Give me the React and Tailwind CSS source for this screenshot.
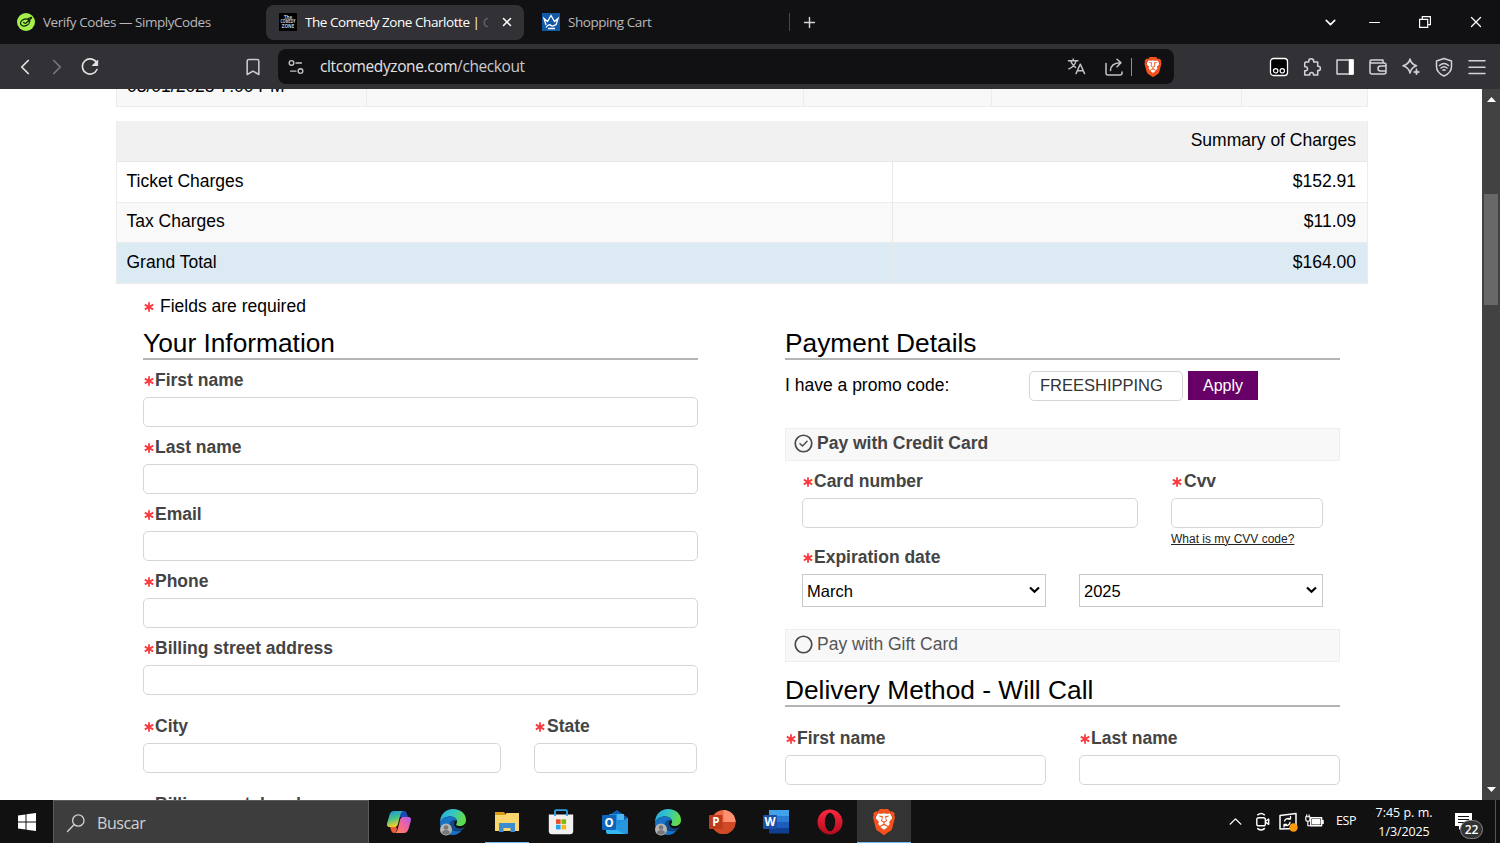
import { Bookmark, ChevronDown, ChevronLeft, ChevronRight, ChevronUp, Menu, Minus, Plus, X } from 'lucide-react'
import { SiBrave } from 'react-icons/si'

const charges = [
  { label: 'Ticket Charges', amount: '$152.91', bg: 'bg-white' },
  { label: 'Tax Charges', amount: '$11.09', bg: 'bg-[#f9f9f9]' },
  { label: 'Grand Total', amount: '$164.00', bg: 'bg-[#dceaf4]' },
]

const infoFields = ['First name', 'Last name', 'Email', 'Phone', 'Billing street address']

function Svg({ size = 20, className = '', children }) {
  return (
    <svg
      width={size}
      height={size}
      viewBox="0 0 20 20"
      fill="none"
      stroke="currentColor"
      strokeWidth="1.5"
      strokeLinecap="round"
      strokeLinejoin="round"
      className={`shrink-0 ${className}`}
    >
      {children}
    </svg>
  )
}

/* ---------- browser ---------- */

function BraveLogo({ size }) {
  return (
    <span className="grid shrink-0 place-items-center">
      <svg width={size} height={size} viewBox="0 0 24 24" className="col-start-1 row-start-1">
        <path d="M6 4h12l2 5-3 9-5 4-5-4-3-9z" fill="#fff" />
      </svg>
      <SiBrave size={size} color="#f4511c" className="col-start-1 row-start-1" />
    </span>
  )
}

function TabBar() {
  return (
    <div className="flex h-11 items-center bg-[#111114] text-[13.500px] text-[#b9b9bb]">
      <div className="flex w-[266px] items-center pl-[17px]">
        <svg width="18" height="18" viewBox="0 0 18 18">
          <circle cx="9" cy="9" r="9" fill="#a5f04c" />
          <ellipse cx="8" cy="9.500" rx="4.600" ry="3.300" fill="none" stroke="#16280c" strokeWidth="1.300" transform="rotate(-20 8 9.500)" />
          <path d="M6.500 9.500l2 1L14.500 5M11 5.500l3.500-1.200M10 9l3-1" fill="none" stroke="#16280c" strokeWidth="1.300" strokeLinecap="round" />
        </svg>
        <span className="ml-2 whitespace-nowrap tracking-[-0.45px]">Verify Codes — SimplyCodes</span>
      </div>
      <div className="flex h-[35px] w-[258px] items-center rounded-lg bg-[#323136] pl-[13px] text-white">
        <svg width="18" height="18" viewBox="0 0 18 18" fill="#ccc" fontFamily="Open Sans, sans-serif" fontSize="4.500" fontWeight="700" textAnchor="middle">
          <path d="M0 0h18v18H0z" fill="#000" />
          <text x="9" y="5.500">The</text>
          <text x="9" y="10.300" textLength="15" lengthAdjust="spacingAndGlyphs">COMEDY</text>
          <text x="9" y="15">ZONE</text>
        </svg>
        <span className="ml-2 w-[183px] overflow-hidden whitespace-nowrap tracking-[-0.45px]">
          The Comedy Zone Charlotte | <span className="text-[#69686e]">C</span>
        </span>
        <X size={14} strokeWidth={2.600} className="ml-3" />
      </div>
      <div className="flex w-[265px] items-center pl-[18px]">
        <svg width="18" height="18" viewBox="0 0 18 18">
          <path d="M0 0h18v18H0z" fill="#1259a8" />
          <path d="M4 12L2 5.500l3.500 3L9 2.500l3.500 6 3.500-3-2 6.500M4 14.500c2-3.500 4-3 5-2s3 .5 5-1M6 15.500h7" fill="none" stroke="#fff" strokeWidth="1.300" />
        </svg>
        <span className="ml-2 tracking-[-0.45px]">Shopping Cart</span>
      </div>
      <div className="h-[18px] w-px bg-[#48474c]" />
      <Plus size={17} strokeWidth={2} className="ml-[11px] text-[#d5d5d7]" />
      <div className="ml-auto flex items-center text-white">
        <ChevronDown size={17} strokeWidth={2.200} />
        <Minus size={17} strokeWidth={1.500} className="ml-[27px]" />
        <Svg size={18} className="ml-[33px]">
          <path d="M4 7h9v9H4zM7 6.500V4h9v9h-2.500" strokeWidth="1.300" strokeLinecap="square" strokeLinejoin="miter" />
        </Svg>
        <X size={18} strokeWidth={1.700} className="mr-[15px] ml-[33px]" />
      </div>
    </div>
  )
}

function ToolbarIcons() {
  return (
    <div className="ml-auto flex items-center gap-[13px] pr-[13px] text-[#d4d4d8]">
      <Svg>
        <rect x="1.500" y="1.500" width="17" height="17" rx="3" fill="#000" stroke="#fff" strokeWidth="1.300" />
        <circle cx="6.700" cy="13.800" r="2.200" stroke="#fff" strokeWidth="1.200" />
        <circle cx="13.300" cy="13.800" r="2.200" stroke="#fff" strokeWidth="1.200" />
      </Svg>
      <Svg>
        <path d="M3.500 5h3.200V4.300a2.500 2.500 0 0 1 5 0V5h4v4.200h.5a2.200 2.200 0 0 1 0 4.400h-.5V18h-4.200v-.7a1.900 1.900 0 0 0-3.800 0V18H2.700v-4.200h.8a2 2 0 0 0 0-4h-.8V6z" />
      </Svg>
      <Svg>
        <path d="M2 3h16v14H2z" />
        <path d="M14.500 3H18v14h-3.500z" fill="#fff" stroke="#fff" />
      </Svg>
      <Svg>
        <path d="M2 4.500A1.500 1.500 0 0 1 3.500 3h11.500v3M2 4.500V15a2 2 0 0 0 2 2h12a2 2 0 0 0 2-2V8a2 2 0 0 0-2-2H3.500A1.500 1.500 0 0 1 2 4.500zM18 9h-5.500a2.500 2.500 0 0 0 0 5H18" />
      </Svg>
      <Svg>
        <path d="M9 2c.8 4 2.500 5.500 6.500 6.700C11.500 10 9.800 12 9 16 8.200 12 6.500 10.200 2 8.700 6.500 7.500 8.200 6 9 2z" />
        <path d="M15.500 12l.8 2.200 2.200.8-2.200.8-.8 2.200-.8-2.200-2.200-.8 2.200-.8z" fill="currentColor" strokeWidth="0.800" />
      </Svg>
      <Svg>
        <path d="M10 1.500L17.500 4v5.500c0 4.500-3 7.500-7.500 9.500-4.500-2-7.500-5-7.500-9.500V4z" />
        <path d="M5.500 8.500c2.700-2.300 6.300-2.300 9 0M7 11c1.800-1.600 4.200-1.600 6 0M9 13.200c.6-.5 1.400-.5 2 0" />
      </Svg>
      <Svg>
        <path d="M2 3.800h16M2 10.200h16M2 16.600h16" />
      </Svg>
    </div>
  )
}

function Toolbar() {
  return (
    <div className="flex h-[45px] items-center bg-[#323136]">
      <div className="flex w-[278px] items-center pl-[12px] text-[#e4e4e6]">
        <ChevronLeft size={26} strokeWidth={1.600} />
        <ChevronRight size={26} strokeWidth={1.600} className="ml-[6px] text-[#77767c]" />
        <Svg size={20} className="ml-[10px]">
          <path d="M16.400 5.300A7.600 7.600 0 1 0 17 12.500" strokeWidth="1.600" />
          <path d="M17.700 3.500v5h-5z" fill="currentColor" strokeWidth="1" />
        </Svg>
        <Bookmark size={20} strokeWidth={1.900} className="ml-[143px] text-[#c9c9cc]" />
      </div>
      <div className="flex h-[35px] w-[896px] items-center rounded-lg bg-[#111114] px-[9px] text-[#c4c4c7]">
        <Svg size={18}>
          <circle cx="5" cy="5.500" r="2.600" />
          <path d="M10 5.500h6M4 14.500h6" />
          <circle cx="15" cy="14.500" r="2.600" />
        </Svg>
        <span className="ml-[15px] text-[15.500px] tracking-[-0.4px] text-[#e2e2e4]">
          cltcomedyzone.com<span className="text-[#c9c9cc]">/checkout</span>
        </span>
        <Svg size={19} className="ml-auto">
          <path d="M1.500 4h10M6.500 2v2M9.500 4c-1 4-4 7-7.500 8.500M4 4.500c1 2.800 3 5 5 6.500M9.500 17.500L14 7.500l4.500 10M11 14.500h6" />
        </Svg>
        <Svg size={20} className="ml-[18px]">
          <path d="M2 6.500V16a2 2 0 0 0 2 2h12a2 2 0 0 0 2-2v-1M6.500 13.500c.3-5 3-7.500 9.500-7.700M13 2.200l4 3.600-4 4" />
        </Svg>
        <div className="ml-[7px] h-[18px] w-px bg-[#8f8e93]" />
        <div className="mr-[2px] ml-[11px]">
          <BraveLogo size={20} />
        </div>
      </div>
      <ToolbarIcons />
    </div>
  )
}

/* ---------- checkout page ---------- */

function Star() {
  return (
    <svg width="10" height="10" viewBox="0 0 10 10" stroke="#fb3a3f" strokeWidth="1.800" className="mt-[2px] shrink-0">
      <path d="M5 .3v9.400M.8 2.600l8.400 4.800M9.200 2.600L.8 7.400" />
    </svg>
  )
}

function Field({ label, className = '', gap = 'gap-[1px]' }) {
  return (
    <div className={className}>
      <label className={`flex h-6 items-center pl-[1px] font-bold text-[#444] ${gap}`}>
        <Star />
        <span className="whitespace-nowrap">{label}</span>
      </label>
      <input className="mt-[5px] block h-[30px] w-full rounded-[5px] border border-[#d6d6d6] bg-white" />
    </div>
  )
}

function Heading({ children }) {
  return (
    <h2 className="flex h-[34px] items-center border-b-2 border-[#b4b4b4] pt-[2px] text-[26.300px] leading-none">
      {children}
    </h2>
  )
}

function PayOption({ label, checked }) {
  return (
    <div
      className={`flex h-[33px] items-center gap-[4px] border border-[#eee] bg-[#f8f8f8] pb-[2px] pl-[8px] ${
        checked ? 'font-bold text-[#444]' : 'text-[#555]'
      }`}
    >
      <Svg size={19} className="text-[#4a4a4a]">
        <circle cx="10" cy="10" r="8.700" strokeWidth="1.800" />
        {checked && <path d="M6.300 10.200l2.600 2.500 4.900-5" />}
      </Svg>
      {label}
    </div>
  )
}

function Select({ value }) {
  return (
    <div className="flex h-[33px] flex-1 items-center justify-between border border-[#c8c8c8] pr-[5px] pl-1 text-[16.500px]">
      <span className="pt-[1px]">{value}</span>
      <svg width="11" height="8" viewBox="0 0 11 8" fill="none" stroke="#000" strokeWidth="2.200">
        <path d="M1 1.500l4.500 4.200L10 1.500" />
      </svg>
    </div>
  )
}

function EventRow() {
  return (
    <div className="flex h-[18px] divide-x divide-[#ececec] overflow-hidden border-x border-b border-[#ececec] bg-[#f8f8f8]">
      <div className="w-[250px] pl-[10px] leading-5 whitespace-nowrap">
        <div className="-mt-[13px]">03/01/2025 7:00 PM</div>
      </div>
      <div className="w-[437px]" />
      <div className="w-[188px]" />
      <div className="w-[250px]" />
      <div className="flex-1" />
    </div>
  )
}

function Charges() {
  return (
    <div className="mt-[14px] border-x border-[#ececec]">
      <div className="flex h-[41px] items-center justify-end border-b border-[#e8e8e8] bg-[#f1f1f1] pr-[11px] pb-[2px]">
        Summary of Charges
      </div>
      {charges.map(row => (
        <div key={row.label} className={`flex h-[40.600px] items-center border-b border-[#ebebeb] ${row.bg}`}>
          <div className="flex h-full w-[776px] items-center border-r border-[#e8e8e8] pb-[2px] pl-[9.500px]">{row.label}</div>
          <div className="flex-1 pr-[11px] pb-[2px] text-right">{row.amount}</div>
        </div>
      ))}
    </div>
  )
}

function YourInformation() {
  return (
    <section className="w-[555px]">
      <Heading>Your Information</Heading>
      <div className="mt-2 flex flex-col gap-2">
        {infoFields.map(label => (
          <Field key={label} label={label} />
        ))}
      </div>
      <div className="mt-[19px] flex gap-[33px]">
        <Field label="City" className="w-[358px]" />
        <Field label="State" className="w-[163px]" gap="gap-[2px]" />
      </div>
      <Field label="Billing postal code" className="mt-[19px]" />
    </section>
  )
}

function PaymentDetails() {
  return (
    <section className="w-[555px]">
      <Heading>Payment Details</Heading>
      <div className="mt-[11px] flex h-[30px] items-center">
        <span className="w-[244px] pb-[1px]">I have a promo code:</span>
        <input
          defaultValue="FREESHIPPING"
          className="h-[30px] w-[154px] rounded-[5px] border border-[#d6d6d6] px-[10px] text-[16.500px] text-[#333]"
        />
        <button className="ml-[5px] h-[29px] w-[70px] bg-[#660066] pt-[1px] text-base text-white">Apply</button>
      </div>
      <div className="mt-[27px]">
        <PayOption label="Pay with Credit Card" checked />
      </div>
      <div className="mt-2 pr-[17px] pl-[17px]">
        <div className="flex gap-[33px]">
          <Field label="Card number" className="w-[336px]" />
          <Field label="Cvv" className="w-[152px]" gap="gap-[2px]" />
        </div>
        <div className="ml-[369px] h-[17px] pt-[3px] text-xs leading-4 whitespace-nowrap text-[#222] underline">
          What is my CVV code?
        </div>
        <label className="flex h-6 items-center gap-[1px] pl-[1px] font-bold text-[#444]">
          <Star />
          Expiration date
        </label>
        <div className="mt-[5px] flex gap-[33px]">
          <Select value="March" />
          <Select value="2025" />
        </div>
      </div>
      <div className="mt-[22px] mb-[11px]">
        <PayOption label="Pay with Gift Card" />
      </div>
      <Heading>Delivery Method - Will Call</Heading>
      <div className="mt-[19px] flex gap-[33px]">
        <Field label="First name" className="flex-1" />
        <Field label="Last name" className="flex-1" />
      </div>
    </section>
  )
}

function Scrollbar() {
  return (
    <div className="flex w-[18px] flex-col items-center bg-[#424242]">
      <svg width="9" height="5" viewBox="0 0 9 5" className="mt-[8px]" fill="#fff">
        <path d="M0 5L4.500 0 9 5z" />
      </svg>
      <div className="mt-[92px] h-[111px] w-[14px] bg-[#686868]" />
      <svg width="9" height="5" viewBox="0 0 9 5" className="mt-auto mb-[8px]" fill="#fff">
        <path d="M0 0h9L4.500 5z" />
      </svg>
    </div>
  )
}

/* ---------- taskbar ---------- */

function Copilot() {
  return (
    <svg width="26" height="26" viewBox="0 0 26 26">
      <defs>
        <linearGradient id="cpA" x1="0" y1="0" x2="0.300" y2="1">
          <stop offset="0" stopColor="#1a8ee8" />
          <stop offset="0.500" stopColor="#3fc08f" />
          <stop offset="1" stopColor="#f1cf26" />
        </linearGradient>
        <linearGradient id="cpB" x1="1" y1="0" x2="0" y2="1">
          <stop offset="0" stopColor="#b05cf0" />
          <stop offset="0.500" stopColor="#f0649a" />
          <stop offset="1" stopColor="#ff8a4a" />
        </linearGradient>
      </defs>
      <path d="M13 2h5c2 0 2.500 1.500 3 3l1 3h-8z" fill="#1b49b8" />
      <path d="M8 2h9c-2 1-2.500 3-3 5l-2 8c-.7 2.500-2 3-4 3H4c-3 0-3.500-2-2.500-5l2-7C4.500 3.500 5.500 2 8 2z" fill="url(#cpA)" />
      <path d="M18 24H9c2-1 2.500-3 3-5l2-8c.7-2.500 2-3 4-3h4c3 0 3.500 2 2.500 5l-2 7c-1 2.500-2 4-4.500 4z" fill="url(#cpB)" />
      <path d="M4 18h6l1 2c-.5 2-1 4-3 4s-2.500-1.500-3-3z" fill="#ee5a3a" />
    </svg>
  )
}

function Edge() {
  return (
    <svg width="28" height="28" viewBox="0 0 28 28">
      <defs>
        <linearGradient id="edgeTop" x1="0" y1="0" x2="1" y2="0.300">
          <stop offset="0" stopColor="#2aa5e0" />
          <stop offset="0.500" stopColor="#32c5c8" />
          <stop offset="1" stopColor="#62db4b" />
        </linearGradient>
      </defs>
      <path d="M1 15C1 6 7 1 14 1c8 0 13 5 13 11 0 4-3 6-6.500 6-3 0-4-1-3-2.500 2-3-1-7-6-7C6 8.500 2 11 1 15z" fill="url(#edgeTop)" />
      <path d="M1 15c1-4 5-6.500 10.500-6.500 3.500 0 6 2 6.300 4.500-3-2-6.800.500-6.800 4 0 5 6 8 12 5-3 4-6 5-9 5-8 0-13-5-13-12z" fill="#1673c6" />
      <path d="M11 17c0-3 2-5 5-5-3 7 3 11 10 7-4 6-15 5-15-2z" fill="#114a8d" />
      <circle cx="7" cy="21.500" r="6" fill="#b5b5b5" />
      <circle cx="7" cy="19.500" r="2.300" fill="#777" />
      <path d="M3 25c0-4 8-4 8 0-2 2-6 2-8 0z" fill="#777" />
    </svg>
  )
}

function Explorer() {
  return (
    <svg width="26" height="22" viewBox="0 0 26 22">
      <path d="M1 1h9l2 3h-11z" fill="#d99a1c" />
      <path d="M1 4h10l1.500-2H25v18H1z" fill="#fbd66d" />
      <path d="M5 21v-9h16v9h-4.500v-4h-7v4z" fill="#3b8bd0" />
    </svg>
  )
}

function Store() {
  return (
    <svg width="26" height="26" viewBox="0 0 26 26">
      <path d="M.8 5.500h24.400V22c0 2-1 3.300-3.300 3.300H4.100c-2.300 0-3.300-1.300-3.300-3.300z" fill="#f1f1f1" />
      <path d="M7 7V2.500c0-.8.500-1.300 1.300-1.300h9.400c.8 0 1.300.5 1.300 1.300V7" fill="none" stroke="#2ba3e2" strokeWidth="1.800" />
      <path d="M8 10.300h4.600v4.600H8z" fill="#e74f25" />
      <path d="M13.500 10.300h4.600v4.600h-4.600z" fill="#7fb900" />
      <path d="M8 15.800h4.600v4.600H8z" fill="#22a4ee" />
      <path d="M13.500 15.800h4.600v4.600h-4.600z" fill="#fdb813" />
    </svg>
  )
}

function Letter({ x, y, children }) {
  return (
    <text x={x} y={y} fill="#fff" fontFamily="Open Sans, sans-serif" fontSize="11.500" fontWeight="700" textAnchor="middle">
      {children}
    </text>
  )
}

function Outlook() {
  return (
    <svg width="28" height="26" viewBox="0 0 28 26">
      <path d="M5 8L16 1l11 8v5H5z" fill="#0f5fae" />
      <path d="M8 5h15v12H8z" fill="#1f8fe0" />
      <path d="M16 5h7v6h-7z" fill="#4db7f0" />
      <path d="M5 12l11 5 11-8v14a2 2 0 0 1-2 2H7a2 2 0 0 1-2-2z" fill="#35b8f1" />
      <path d="M27 9L12 19l12 6h1a2 2 0 0 0 2-2z" fill="#2797e0" />
      <rect x="1" y="6" width="14" height="15" rx="1" fill="#0f64b8" />
      <Letter x={8} y={17.600}>O</Letter>
    </svg>
  )
}

function PowerPoint() {
  return (
    <svg width="28" height="26" viewBox="0 0 28 26">
      <circle cx="15.500" cy="13" r="12" fill="#ec6c47" />
      <path d="M15.500 1a12 12 0 0 1 12 12h-12z" fill="#ff9070" />
      <path d="M3.500 13h24a12 12 0 0 1-24 0z" fill="#cf4926" />
      <rect x="1" y="6" width="13.500" height="14" rx="1" fill="#bd3a1b" />
      <Letter x={7.800} y={17.200}>P</Letter>
    </svg>
  )
}

function Word() {
  return (
    <svg width="28" height="26" viewBox="0 0 28 26">
      <path d="M7 1h20v6.500H7z" fill="#41a1ea" />
      <path d="M7 7h20v6H7z" fill="#2b7cd3" />
      <path d="M7 13h20v6H7z" fill="#1b5cbe" />
      <path d="M7 19h20v5.500H7z" fill="#103f91" />
      <rect x="1" y="6" width="14" height="14" rx="1" fill="#1a4fa6" />
      <Letter x={8} y={17.200}>W</Letter>
    </svg>
  )
}

function Opera() {
  return (
    <svg width="26" height="26" viewBox="0 0 26 26">
      <defs>
        <linearGradient id="opera" x1="0" y1="0" x2="0" y2="1">
          <stop offset="0" stopColor="#ff2740" />
          <stop offset="1" stopColor="#b30c1c" />
        </linearGradient>
      </defs>
      <ellipse cx="13" cy="13" rx="12.500" ry="12.500" fill="url(#opera)" />
      <ellipse cx="13" cy="13" rx="5.200" ry="9.300" fill="#111" />
    </svg>
  )
}

const apps = [
  { id: 'copilot', icon: <Copilot /> },
  { id: 'edge', icon: <Edge /> },
  { id: 'explorer', icon: <Explorer />, running: true },
  { id: 'store', icon: <Store /> },
  { id: 'outlook', icon: <Outlook /> },
  { id: 'edge2', icon: <Edge /> },
  { id: 'powerpoint', icon: <PowerPoint /> },
  { id: 'word', icon: <Word /> },
  { id: 'opera', icon: <Opera /> },
  { id: 'brave', icon: <BraveLogo size={26} />, active: true },
]

function Tray() {
  return (
    <div className="ml-auto flex h-full items-center text-white">
      <ChevronUp size={21} strokeWidth={1.600} />
      <Svg size={19} className="ml-[7px]">
        <rect x="4" y="6" width="9" height="8.500" rx="2" />
        <path d="M13.500 9.500l3-2v5.500l-3-2M5 3c2-1.600 5-1.600 7 0M5 17.500c2 1.600 5 1.600 7 0" />
      </Svg>
      <Svg size={20} className="ml-[6px]">
        <path d="M2 3.500L18 1.500v15L2 17z" />
        <path d="M6.500 9a4 4 0 0 1 6-2M12.500 4.500V7H10M12 10.500a4 4 0 0 1-6 2.500M6 15v-2.500h2.500" strokeWidth="1.300" />
        <circle cx="15.500" cy="15.500" r="4.200" fill="#ff9a0d" stroke="none" />
      </Svg>
      <Svg size={19} className="ml-[7px]">
        <path d="M6 6h11.500v8.500H6zM19 9v3" />
        <path d="M8 8.200h7.500v4.200H8z" fill="currentColor" />
        <path d="M.8 5h4.400v2.500a2.200 2.200 0 0 1-4.400 0zM1.800 5V3M4.300 5V3M3 10v4.500h3" strokeWidth="1.200" />
      </Svg>
      <span className="ml-[12px] w-[21px] text-[12.500px] tracking-[-0.45px]">ESP</span>
      <div className="ml-[12px] w-[70px] text-center text-[12.500px] leading-[19px] tracking-[-0.1px] whitespace-nowrap">
        <div className="tracking-normal">7:45 p. m.</div>
        <div>1/3/2025</div>
      </div>
      <div className="relative ml-[15px] h-full w-[41px]">
        <svg width="20" height="19" viewBox="0 0 20 19" className="mt-[12px]">
          <path d="M1 1h17v13H9l-4 4v-4H1z" fill="#fff" />
          <path d="M4 4.500h11M4 7.500h11M4 10.500h11" stroke="#111" />
        </svg>
        <span className="absolute top-[20px] left-[6px] flex h-[19px] w-[23px] items-center justify-center rounded-full border border-[#858585] bg-[#333] text-xs font-semibold">
          22
        </span>
      </div>
      <div className="h-full w-[5px] border-l border-[#555]" />
    </div>
  )
}

function Taskbar() {
  return (
    <div className="flex h-[43px] items-center bg-[#111]">
      <div className="flex w-[53px] justify-center">
        <svg width="18" height="18" viewBox="0 0 18 18" fill="#fff">
          <path d="M0 2.500l7.500-1V8.500H0zM8.500 1.300L18 0v8.500H8.500zM0 9.500h7.500v7L0 15.500zM8.500 9.500H18V18l-9.500-1.300z" />
        </svg>
      </div>
      <div className="flex h-full w-[316px] items-center border border-b-0 border-[#5a5a5a] bg-[#3d3d3d] pt-[1px] pl-[12px] text-[#d2d2d2]">
        <Svg size={20}>
          <circle cx="12.300" cy="7.500" r="5.700" strokeWidth="1.300" />
          <path d="M8 11.700L1.500 18.500" strokeWidth="1.300" />
        </Svg>
        <span className="ml-[11px] text-base tracking-[-0.4px]">Buscar</span>
      </div>
      <div className="ml-[3px] flex h-full">
        {apps.map(app => (
          <div key={app.id} className={`flex h-full w-[53.900px] justify-center ${app.active ? 'bg-[#333]' : ''}`}>
            <div
              className={`flex h-full items-center justify-center border-b-[1.500px] pt-[2px] ${
                app.active ? 'w-full' : 'w-[44px]'
              } ${app.active || app.running ? 'border-[#76b9ed]' : 'border-transparent'}`}
            >
              {app.icon}
            </div>
          </div>
        ))}
      </div>
      <Tray />
    </div>
  )
}

export default function App() {
  return (
    <div className="flex h-[843px] w-[1500px] flex-col overflow-hidden bg-white font-['Open_Sans',sans-serif]">
      <TabBar />
      <Toolbar />
      <div className="flex h-[711px]">
        <main className="h-full flex-1 overflow-hidden pr-[114px] pl-[116px] font-['Liberation_Sans',Arial,sans-serif] text-[17.500px] leading-6 text-black">
          <EventRow />
          <Charges />
          <div className="flex h-[42px] items-center gap-[6px] pt-[3px] pl-7">
            <Star />
            Fields are required
          </div>
          <div className="flex justify-between pr-7 pl-[27px]">
            <YourInformation />
            <PaymentDetails />
          </div>
        </main>
        <Scrollbar />
      </div>
      <Taskbar />
    </div>
  )
}
